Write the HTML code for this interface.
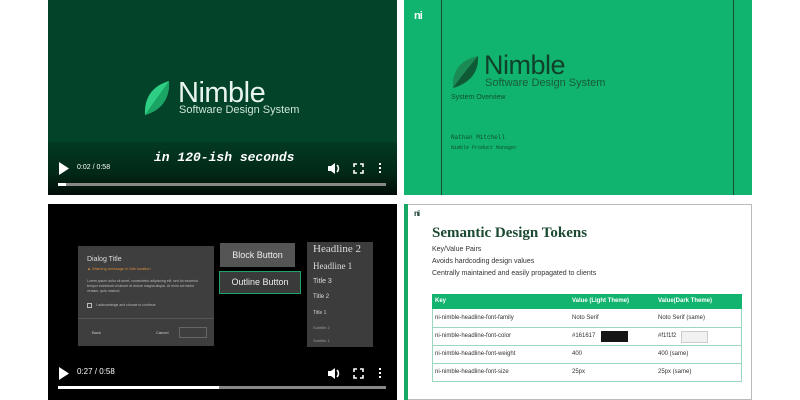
<!DOCTYPE html>
<html><head><meta charset="utf-8"><style>
*{margin:0;padding:0;box-sizing:border-box}
body{width:800px;height:400px;background:#fff;position:relative;overflow:hidden;font-family:"Liberation Sans",sans-serif}
.a{position:absolute}
</style></head><body>

<!-- Panel 1 -->
<div class="a" style="left:48px;top:0;width:349px;height:195px;background:#03432a"></div>
<div class="a" style="left:48px;top:142px;width:349px;height:53px;background:linear-gradient(#023a24,#022817 60%,#010d07 100%)"></div>
<svg class="a" style="left:142px;top:80px" width="30" height="36" viewBox="0 0 30 36"><path d="M27 1 C10 6 2 18 3 35 C20 30 28 18 27 1Z" fill="#2ecf84"/><path d="M27 1 C18 14 10 24 3 35 C20 30 28 18 27 1Z" fill="#1aa565"/></svg>
<div class="a" style="left:178px;top:77px;color:#e8f4ee;font-size:29px;letter-spacing:-0.5px">Nimble</div>
<div class="a" style="left:179px;top:104px;color:#cfe5da;font-size:11px">Software Design System</div>
<div class="a" style="left:154px;top:150px;color:#fff;font-family:'Liberation Mono',monospace;font-style:italic;font-weight:bold;font-size:13px">in 120-ish seconds</div>
<svg class="a" style="left:58px;top:162px" width="11" height="13"><path d="M1 0 L11 6.5 L1 13Z" fill="#fff"/></svg>
<div class="a" style="left:77px;top:164px;color:#fff;font-size:7px">0:02 / 0:58</div>
<svg class="a" style="left:327px;top:162px" width="14" height="13"><path d="M1 4h3l4-3v11l-4-3H1Z" fill="#fff"/><path d="M10 3a5 5 0 0 1 0 7" stroke="#fff" stroke-width="1.6" fill="none"/></svg>
<svg class="a" style="left:353px;top:163px" width="11" height="11" fill="none" stroke="#fff" stroke-width="1.6"><path d="M1 4V1h3M7 1h3v3M10 7v3H7M4 10H1V7"/></svg>
<div class="a" style="left:379px;top:163px;width:2px;height:2px;background:#fff;box-shadow:0 4px #fff,0 8px #fff"></div>
<div class="a" style="left:58px;top:183px;width:328px;height:3px;background:#888"></div>
<div class="a" style="left:58px;top:183px;width:8px;height:3px;background:#fff"></div>

<!-- Panel 2 -->
<div class="a" style="left:404px;top:0;width:348px;height:195px;background:#11b46f"></div>
<div class="a" style="left:441px;top:0;width:1px;height:195px;background:#1d4a33"></div>
<div class="a" style="left:733px;top:0;width:1px;height:195px;background:#1d4a33"></div>
<div class="a" style="left:414px;top:10px;color:#fff;font-weight:bold;font-size:11px;letter-spacing:-1px">ni</div>
<svg class="a" style="left:450px;top:55px" width="30" height="34" viewBox="0 0 30 34"><path d="M28 1 C10 5 2 16 3 33 C20 28 29 17 28 1Z" fill="#1b8a55"/><path d="M28 1 C18 13 10 23 3 33 C20 28 29 17 28 1Z" fill="#0e5a36"/></svg>
<div class="a" style="left:484px;top:50px;color:#10412a;font-size:27px;letter-spacing:-0.5px">Nimble</div>
<div class="a" style="left:485px;top:77px;color:#185a3a;font-size:11px">Software Design System</div>
<div class="a" style="left:451px;top:94px;color:#124d30;font-size:7px">System Overview</div>
<div class="a" style="left:451px;top:134px;color:#124d30;font-family:'Liberation Mono',monospace;font-size:6px">Nathan Mitchell</div>
<div class="a" style="left:451px;top:145px;color:#124d30;font-family:'Liberation Mono',monospace;font-size:5px">Nimble Product Manager</div>

<!-- Panel 3 -->
<div class="a" style="left:48px;top:204px;width:349px;height:196px;background:#000"></div>
<div class="a" style="left:78px;top:246px;width:136px;height:100px;background:#3e3e3e"></div>
<div class="a" style="left:87px;top:256px;color:#ddd;font-size:7px">Dialog Title</div>
<div class="a" style="left:87px;top:266px;color:#d98a3a;font-size:4px">▲ Warning message in this location</div>
<div class="a" style="left:87px;top:279px;color:#bbb;font-size:3.5px;width:120px;line-height:5px">Lorem ipsum dolor sit amet, consectetur adipiscing elit, sed do eiusmod tempor incididunt ut labore et dolore magna aliqua. Ut enim ad minim veniam, quis nostrud.</div>
<div class="a" style="left:87px;top:303px;width:5px;height:5px;border:1px solid #bbb"></div>
<div class="a" style="left:96px;top:303px;color:#bbb;font-size:3.5px">I acknowledge and choose to continue</div>
<div class="a" style="left:78px;top:318px;width:136px;height:1px;background:#555"></div>
<div class="a" style="left:92px;top:330px;color:#ccc;font-size:4px">Back</div>
<div class="a" style="left:156px;top:330px;color:#ccc;font-size:4px">Cancel</div>
<div class="a" style="left:179px;top:327px;width:28px;height:11px;border:1px solid #666"></div>
<div class="a" style="left:220px;top:243px;width:75px;height:24px;background:#555;color:#eee;font-size:9px;text-align:center;line-height:24px">Block Button</div>
<div class="a" style="left:219px;top:271px;width:82px;height:23px;border:1px solid #1fa36a;background:#3a3a3a;color:#eee;font-size:9px;text-align:center;line-height:21px">Outline Button</div>
<div class="a" style="left:307px;top:242px;width:66px;height:105px;background:#3c3c3c"></div>
<div class="a" style="left:313px;top:243px;color:#ddd;font-family:'Liberation Serif',serif;font-size:11px">Headline 2</div>
<div class="a" style="left:313px;top:261px;color:#ddd;font-family:'Liberation Serif',serif;font-size:9px">Headline 1</div>
<div class="a" style="left:313px;top:278px;color:#ddd;font-size:7px">Title 3</div>
<div class="a" style="left:313px;top:294px;color:#ddd;font-size:6px">Title 2</div>
<div class="a" style="left:313px;top:310px;color:#ccc;font-size:5px">Title 1</div>
<div class="a" style="left:313px;top:325px;color:#999;font-size:4px">Subtitle 2</div>
<div class="a" style="left:313px;top:338px;color:#999;font-size:4px">Subtitle 1</div>
<svg class="a" style="left:58px;top:367px" width="11" height="13"><path d="M1 0 L11 6.5 L1 13Z" fill="#fff"/></svg>
<div class="a" style="left:77px;top:367px;color:#fff;font-size:8px">0:27 / 0:58</div>
<svg class="a" style="left:327px;top:367px" width="14" height="13"><path d="M1 4h3l4-3v11l-4-3H1Z" fill="#fff"/><path d="M10 3a5 5 0 0 1 0 7" stroke="#fff" stroke-width="1.6" fill="none"/></svg>
<svg class="a" style="left:353px;top:368px" width="11" height="11" fill="none" stroke="#fff" stroke-width="1.6"><path d="M1 4V1h3M7 1h3v3M10 7v3H7M4 10H1V7"/></svg>
<div class="a" style="left:379px;top:368px;width:2px;height:2px;background:#fff;box-shadow:0 4px #fff,0 8px #fff"></div>
<div class="a" style="left:58px;top:386px;width:328px;height:3px;background:#888"></div>
<div class="a" style="left:58px;top:386px;width:161px;height:3px;background:#fff"></div>

<!-- Panel 4 -->
<div class="a" style="left:404px;top:204px;width:348px;height:196px;background:#fff;border:1px solid #bbb"></div>
<div class="a" style="left:404px;top:204px;width:4px;height:196px;background:#18a866"></div>
<div class="a" style="left:414px;top:209px;color:#143a28;font-weight:bold;font-size:8px;letter-spacing:-1px">ni</div>
<div class="a" style="left:432px;top:225px;color:#1c4a33;font-family:'Liberation Serif',serif;font-weight:bold;font-size:15px">Semantic Design Tokens</div>
<div class="a" style="left:432px;top:244px;color:#333;font-size:7px;line-height:12px">Key/Value Pairs<br>Avoids hardcoding design values<br>Centrally maintained and easily propagated to clients</div>
<div class="a" style="left:432px;top:294px;width:310px;height:88px;border:1px solid #9ad8bd"></div>
<div class="a" style="left:432px;top:294px;width:310px;height:15px;background:#12b46f"></div>
<div class="a" style="left:435px;top:298px;color:#fff;font-weight:bold;font-size:6px">Key</div>
<div class="a" style="left:572px;top:298px;color:#fff;font-weight:bold;font-size:6px">Value (Light Theme)</div>
<div class="a" style="left:658px;top:298px;color:#fff;font-weight:bold;font-size:6px">Value(Dark Theme)</div>
<div class="a" style="left:432px;top:327px;width:310px;height:1px;background:#9ad8bd"></div>
<div class="a" style="left:432px;top:345px;width:310px;height:1px;background:#9ad8bd"></div>
<div class="a" style="left:432px;top:363px;width:310px;height:1px;background:#9ad8bd"></div>
<div class="a" style="left:435px;top:315px;color:#333;font-size:6px">ni-nimble-headline-font-family</div>
<div class="a" style="left:572px;top:315px;color:#333;font-size:6px">Noto Serif</div>
<div class="a" style="left:658px;top:315px;color:#333;font-size:6px">Noto Serif (same)</div>
<div class="a" style="left:435px;top:333px;color:#333;font-size:6px">ni-nimble-headline-font-color</div>
<div class="a" style="left:572px;top:333px;color:#333;font-size:6px">#161617</div>
<div class="a" style="left:601px;top:331px;width:27px;height:11px;background:#161617"></div>
<div class="a" style="left:658px;top:333px;color:#333;font-size:6px">#f1f1f2</div>
<div class="a" style="left:681px;top:331px;width:27px;height:12px;background:#f1f1f2;border:1px solid #ccc"></div>
<div class="a" style="left:435px;top:351px;color:#333;font-size:6px">ni-nimble-headline-font-weight</div>
<div class="a" style="left:572px;top:351px;color:#333;font-size:6px">400</div>
<div class="a" style="left:658px;top:351px;color:#333;font-size:6px">400 (same)</div>
<div class="a" style="left:435px;top:369px;color:#333;font-size:6px">ni-nimble-headline-font-size</div>
<div class="a" style="left:572px;top:369px;color:#333;font-size:6px">25px</div>
<div class="a" style="left:658px;top:369px;color:#333;font-size:6px">25px (same)</div>
</body></html>
